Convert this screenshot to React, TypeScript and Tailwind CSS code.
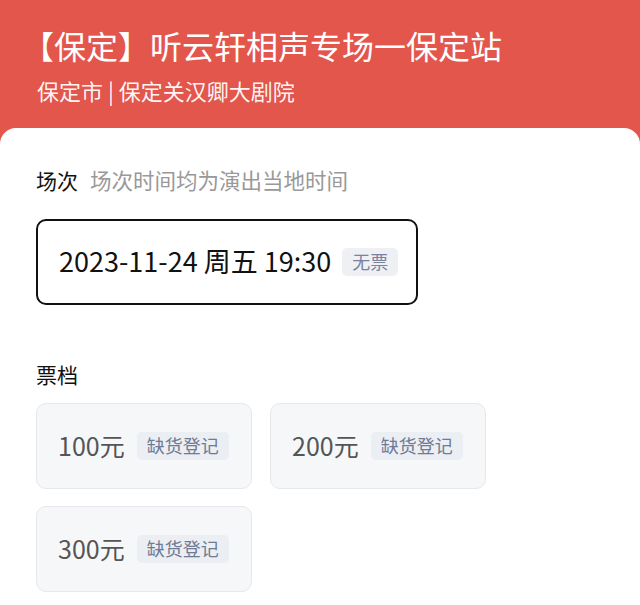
const font = { fontFamily: '"Noto Sans CJK SC", "Noto Sans", sans-serif' };

const tiers = ['100元', '200元', '300元'];

export default function App() {
  return (
    <div className="min-h-[605px] bg-[#e2564c] flex flex-col" style={font}>
      {/* Header */}
      <div className="pl-[22px] pr-4 pt-[22px] h-[128px] text-white">
        <h1 className="text-[32px] leading-[46px]">【保定】听云轩相声专场一保定站</h1>
        <p className="ml-[15px] mt-[7px] text-[22px] leading-[30px] text-white/95">保定市 | 保定关汉卿大剧院</p>
      </div>

      {/* Card */}
      <div className="flex-1 bg-white rounded-t-[16px] px-9 pt-[36px]">
        <div className="flex items-baseline gap-[12px]">
          <span className="text-[21px] text-[#111]">场次</span>
          <span className="text-[21.5px] text-[#999]">场次时间均为演出当地时间</span>
        </div>

        <div className="mt-[22px] w-[382px] h-[86px] border-2 border-[#111] rounded-[10px] flex items-center pl-[21px] gap-[11px]">
          <span className="text-[27px] text-[#111]">2023-11-24 周五 19:30</span>
          <span className="h-[28px] px-[10px] rounded-[5px] bg-[#eef0f4] text-[18px] text-[#7a82a0] flex items-center">无票</span>
        </div>

        <div className="mt-[54px] text-[21px] text-[#111] leading-[30px]">票档</div>

        <div className="mt-[14px] grid grid-cols-[216px_216px] gap-x-[18px] gap-y-[17px]">
          {tiers.map((t) => (
            <div
              key={t}
              className="h-[86px] bg-[#f6f7f9] border border-[#e6e8ec] rounded-[10px] flex items-center pl-[21px] gap-[12px]"
            >
              <span className="text-[25px] text-[#555]">{t}</span>
              <span className="h-[28px] px-[10px] rounded-[5px] bg-[#ebeef3] text-[18px] text-[#6f7a95] flex items-center">缺货登记</span>
            </div>
          ))}
        </div>
      </div>
    </div>
  );
}
